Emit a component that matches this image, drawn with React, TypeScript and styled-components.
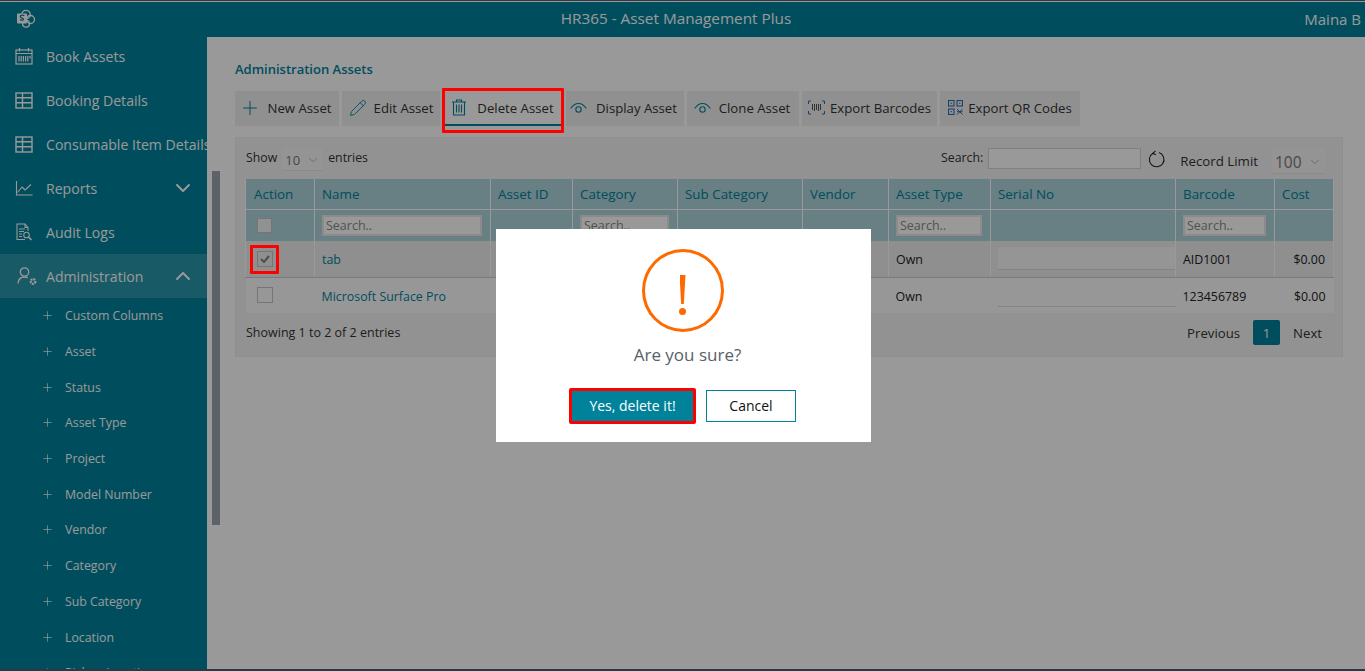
import React from "react"
import styled, { createGlobalStyle } from "styled-components"
import { ChevronDown, ChevronUp, Plus, Pencil } from "lucide-react"

const GlobalStyle = createGlobalStyle`
  html, body {
    margin: 0;
    padding: 0;
    height: 100%;
    overflow: hidden;
    background: #fff;
  }
  * { box-sizing: border-box; }
  body {
    font-family: "Open Sans", "Noto Sans", sans-serif;
    font-size: 13px;
    color: #333;
  }
`

const Page = styled.div`
  height: 671px;
  border-top: 1px solid #46606f;
  padding-top: 1px;
  display: flex;
  flex-direction: column;
  overflow: hidden;
  border-bottom: 2px solid #46606f;
`

const Header = styled.header`
  height: 35px;
  flex: none;
  background: #00829b;
  color: #fff;
  display: flex;
  align-items: center;
  position: relative;
  z-index: 1;
  justify-content: center;
  padding: 0 13px 3px 0;
  font-size: 15.3px;
`

const LogoBox = styled.span`
  position: absolute;
  left: 16px;
  top: 7px;
  display: flex;
`

const UserName = styled.span`
  position: absolute;
  right: 4px;
  top: 7px;
  font-size: 15px;
  white-space: nowrap;
`

const Body = styled.div`
  flex: 1;
  display: flex;
  min-height: 0;
`

const Sidebar = styled.nav`
  width: 207px;
  flex: none;
  background: #00829b;
  color: #fff;
  overflow: hidden;
  margin-top: -3px;
`

const NavItem = styled.div<{ $active?: boolean }>`
  height: 44px;
  display: flex;
  align-items: center;
  padding-left: 15px;
  white-space: nowrap;
  font-size: 14.1px;
  position: relative;
  background: ${(p) => (p.$active ? "rgba(255,255,255,.16)" : "transparent")};
`

const NavIcon = styled.span`
  width: 31px;
  flex: none;
  display: flex;
`

const NavCaret = styled.span`
  position: absolute;
  left: 171px;
  top: 10px;
  display: flex;
`

const SubItem = styled.div`
  height: 35.7px;
  display: flex;
  align-items: center;
  padding-left: 41px;
  gap: 11px;
  font-size: 12.3px;
  white-space: nowrap;
`

const Scrollbar = styled.div`
  position: absolute;
  left: 212px;
  top: 171px;
  width: 8px;
  height: 354px;
  background: #9ba3ad;
`

const Content = styled.main`
  flex: 1;
  background: #fff;
  padding: 25px 0 0 28px;
  min-width: 0;
`

const Title = styled.h1`
  margin: 0 0 15px 0;
  font-size: 13px;
  line-height: 14px;
  font-weight: 600;
  color: #00829b;
`

const Toolbar = styled.div`
  display: flex;
  gap: 3px;
  height: 35px;
`

const ToolButton = styled.div<{ $width: number; $selected?: boolean; $gap: number; $nudge?: number }>`
  width: ${(p) => p.$width}px;
  background: ${(p) => (p.$selected ? "transparent" : "#f0f0f0")};
  border-bottom: 2px solid ${(p) => (p.$selected ? "#00829b" : "transparent")};
  margin: ${(p) => (p.$selected ? "0 2px 0 2px" : "0")};
  padding-right: ${(p) => p.$nudge ?? 0}px;
  display: flex;
  align-items: center;
  justify-content: center;
  gap: ${(p) => p.$gap}px;
  font-size: 13.2px;
  color: #333;
  white-space: nowrap;
  svg { color: #00829b; flex: none; }
`

const Panel = styled.section`
  margin-top: 11px;
  width: 1108px;
  height: 220px;
  background: #f4f4f4;
  border: 1px solid #eee;
  padding: 10px 10px 0;
`

const ControlRow = styled.div`
  display: flex;
  align-items: flex-start;
  height: 31px;
  font-size: 12.3px;
`

const ShowLabel = styled.span`
  margin-right: 5px;
  line-height: 20px;
`

const FakeSelect = styled.div<{ $width: number; $big?: boolean }>`
  width: ${(p) => p.$width}px;
  height: ${(p) => (p.$big ? 26 : 23)}px;
  background: #f7f7f7;
  border-bottom: 1px solid #e6e6e6;
  display: flex;
  align-items: center;
  justify-content: space-between;
  padding: 2px 3px 0 3px;
  font-size: ${(p) => (p.$big ? 15.5 : 13)}px;
  color: #777;
  svg { color: #888; }
`

const EntriesLabel = styled.span`
  margin-left: 5px;
  line-height: 20px;
`

const Spacer = styled.div`
  flex: 1;
`

const SearchLabel = styled.span`
  margin-right: 5px;
  font-size: 12.3px;
  line-height: 20px;
`

const SearchBox = styled.input`
  width: 153px;
  height: 21px;
  border: 1px solid #d6d6d6;
  background: #fff;
  padding: 0;
`

const Refresh = styled.span`
  display: flex;
  margin: 2px 14px 0 7px;
`

const LimitLabel = styled.span`
  font-size: 13.3px;
  line-height: 20px;
  margin: 3px 14px 0 0;
`

const LimitWrap = styled.div`
  margin-right: 7px;
`

const Table = styled.table`
  border-collapse: collapse;
  table-layout: fixed;
  width: 1088px;
  margin-left: -1px;
`

const HeadCell = styled.th`
  height: 30px;
  background: #add4da;
  border: 1px solid #fff;
  border-top: 0;
  color: #00829b;
  font-weight: 400;
  font-size: 13.4px;
  text-align: left;
  padding: 0 7px;
  white-space: nowrap;
  &:first-child { padding-left: 8px; }
`

const FilterCell = styled.td`
  height: 32px;
  background: #add4da;
  border-left: 1px solid #fff;
  border-right: 1px solid #fff;
  padding: 0 8px 0 7px;
`

const FilterInput = styled.input`
  width: 100%;
  height: 21px;
  border: 2px solid #ebe6e6;
  background: #fff;
  font: 12.5px "Open Sans", sans-serif;
  padding: 0 2px;
  display: block;
  &::placeholder { color: #8a8a8a; opacity: 1; }
`

const BodyRow = styled.tr<{ $selected?: boolean }>`
  background: ${(p) => (p.$selected ? "#eee" : "#fcfcfc")};
  td {
    border-left: ${(p) => (p.$selected ? "1px solid #fff" : "0")};
    border-right: ${(p) => (p.$selected ? "1px solid #fff" : "0")};
    border-bottom: ${(p) => (p.$selected ? "1px solid #ccc" : "0")};
  }
`

const Cell = styled.td<{ $right?: boolean; $link?: boolean }>`
  height: 36px;
  padding: 2px ${(p) => (p.$right ? 8 : 7)}px 0 7px;
  white-space: nowrap;
  font-size: 12.4px;
  text-align: ${(p) => (p.$right ? "right" : "left")};
  color: ${(p) => (p.$link ? "#00829b" : "#222")};
`

const CheckCell = styled.td`
  height: 36px;
  padding: 0 7px;
`

const SerialCell = styled.td`
  height: 36px;
  padding: 6px 0 0 7px;
  vertical-align: top;
`

const SerialField = styled.div<{ $filled?: boolean }>`
  height: 23px;
  background: ${(p) => (p.$filled ? "#f9f9f9" : "transparent")};
  border-bottom: 1px solid #ddd;
`

const CheckBox = styled.span<{ $small?: boolean }>`
  width: ${(p) => (p.$small ? 15 : 16)}px;
  height: ${(p) => (p.$small ? 15 : 16)}px;
  margin-left: 4px;
  display: flex;
  align-items: center;
  justify-content: center;
  background: ${(p) => (p.$small ? "#f2f2f2" : "transparent")};
  border: 1px solid #c4c4c4;
`

const Footer = styled.div`
  display: flex;
  align-items: center;
  justify-content: space-between;
  height: 39px;
  font-size: 12.5px;
  padding-right: 10px;
`

const Pager = styled.div`
  display: flex;
  align-items: center;
  font-size: 13.2px;
  gap: 13px;
`

const PageNumber = styled.span`
  width: 27px;
  height: 25px;
  background: #00829b;
  color: #fff;
  display: flex;
  align-items: center;
  justify-content: center;
  border-radius: 2px;
`

const Overlay = styled.div`
  position: fixed;
  inset: 0;
  z-index: 2;
  background: rgba(0, 0, 0, 0.4);
  display: flex;
  align-items: flex-start;
  justify-content: center;
  padding: 229px 0 0 2px;
`

const RedMark = styled.span<{ $left: number; $top: number; $width: number; $height: number }>`
  position: absolute;
  left: ${(p) => p.$left}px;
  top: ${(p) => p.$top}px;
  width: ${(p) => p.$width}px;
  height: ${(p) => p.$height}px;
  border: 3px solid #ff0000;
  border-radius: 1px;
`

const Modal = styled.div`
  width: 375px;
  height: 213px;
  background: #fff;
  display: flex;
  flex-direction: column;
  align-items: center;
  padding: 20px 2px 0 0;
`

const AlertCircle = styled.div`
  width: 82px;
  height: 83px;
  border: 3px solid #ff6a00;
  border-radius: 50%;
  display: flex;
  flex-direction: column;
  align-items: center;
  padding-top: 23px;
`

const AlertBar = styled.span`
  width: 6px;
  height: 29px;
  background: #ff6a00;
  clip-path: polygon(0 0, 100% 0, 72% 100%, 28% 100%);
`

const AlertDot = styled.span`
  width: 7px;
  height: 7px;
  border-radius: 50%;
  background: #ff6a00;
  margin-top: 4px;
`

const Question = styled.div`
  font-size: 17px;
  color: #595f69;
  margin: 12px 0 0 10px;
  line-height: 22px;
`

const ModalActions = styled.div`
  display: flex;
  gap: 10px;
  margin-top: 22px;
  align-items: center;
`

const ConfirmButton = styled.button`
  width: 127px;
  height: 36px;
  background: #00829b;
  color: #fff;
  border: 3px solid #ff0000;
  border-radius: 2px;
  font: 14px "Open Sans", sans-serif;
  padding: 0 0 2px;
`

const CancelButton = styled.button`
  width: 90px;
  height: 32px;
  background: #fff;
  color: #111;
  border: 1px solid #00829b;
  font: 14px "Open Sans", sans-serif;
  padding: 0 0 2px;
`

const SharePointLogo = () => (
  <svg width="20" height="20" viewBox="0 0 20 20" fill="none">
    <circle cx="10" cy="5.5" r="4.200" stroke="#fff" strokeWidth="1.300" />
    <circle cx="14.500" cy="10.500" r="4" stroke="#fff" strokeWidth="1.300" />
    <circle cx="10" cy="14.800" r="3.400" stroke="#fff" strokeWidth="1.300" />
    <rect x="1" y="4.500" width="10" height="10" rx="1" fill="#fff" />
    <path d="M8.300 6.800c-.6-.5-1.300-.7-2-.7-1.200 0-2 .6-2 1.500 0 1.800 3.200 1.200 3.200 2.600 0 .6-.6 1-1.400 1-.8 0-1.500-.3-2.100-.8" stroke="#00829b" strokeWidth="1.300" />
  </svg>
)

const CalendarIcon = () => (
  <svg width="18" height="18" viewBox="0 0 18 18" fill="none" stroke="#fff" strokeWidth="1.200">
    <rect x="1" y="3" width="16" height="14" />
    <path d="M1 6.500h16M4.500 1v3.500M13.500 1v3.500M4 9v5.500M6.200 9v5.500M8.400 9v5.500M10.600 9v5.500M12.800 9v5.500M15 9v2.500" />
  </svg>
)

const GridIcon = () => (
  <svg width="18" height="17" viewBox="0 0 18 17" fill="none" stroke="#fff" strokeWidth="1.400">
    <rect x="1" y="1" width="16" height="15" />
    <path d="M1 5.800h16M1 10.800h16M7.500 1v15" />
  </svg>
)

const ChartIcon = () => (
  <svg width="18" height="16" viewBox="0 0 18 16" fill="none" stroke="#fff" strokeWidth="1.100">
    <path d="M1.500 1v14h16" />
    <path d="M2.500 12.500 7 7l3 3 6-5.500" />
  </svg>
)

const AuditIcon = () => (
  <svg width="18" height="18" viewBox="0 0 18 18" fill="none" stroke="#fff" strokeWidth="1.100">
    <path d="M10 16.500H2V1h8l3 3.500V8" />
    <path d="M10 1v3.500h3M4 6h6M4 8.500h5M4 11h3M4 13.500h3" />
    <circle cx="11.500" cy="12" r="2.800" />
    <path d="m13.500 14 3 3" strokeWidth="1.600" />
  </svg>
)

const AdminIcon = () => (
  <svg width="21" height="19" viewBox="0 0 21 19" fill="none" stroke="#fff" strokeWidth="1.300" style={{ marginLeft: 2 }}>
    <circle cx="7.500" cy="5" r="4.200" />
    <path d="M1 16.500c.4-4.500 3-6.500 6.500-6.500 1.300 0 2.400.3 3.300.8" />
    <circle cx="16" cy="14.500" r="2.300" strokeWidth="2.200" strokeDasharray="1.800 .7" />
  </svg>
)

const TrashIcon = () => (
  <svg width="14" height="17" viewBox="0 0 14 17" fill="none" stroke="currentColor" strokeWidth="1.100">
    <path d="M0 3h14M4.500 3V1h5v2M1.500 3v13h11V3M4.500 5.500v8M7 5.500v8M9.500 5.500v8" />
  </svg>
)

const ArcEyeIcon = () => (
  <svg width="17" height="12" viewBox="0 0 17 12" fill="none" stroke="currentColor" strokeWidth="1.100">
    <path d="M.7 6.500C3 3 5.500 1.500 8.500 1.500s5.500 1.500 7.800 5" />
    <circle cx="8.500" cy="7.500" r="2.700" />
  </svg>
)

const BarcodeIcon = () => (
  <svg width="17" height="15" viewBox="0 0 17 15" fill="none" stroke="#2a6fb0" strokeWidth="1">
    <path d="M3 1H.500v3M14 1h2.500v3M3 14H.500v-3M14 14h2.500v-3" />
    <path d="M4.500 4v6M6.500 4v7M8.500 4v6M10.500 4v7M12.500 4v6" stroke="#555" />
  </svg>
)

const QrIcon = () => (
  <svg width="15" height="15" viewBox="0 0 15 15" fill="none" stroke="#2a6fb0" strokeWidth="1.100">
    <rect x=".5" y=".5" width="5.500" height="5.500" />
    <rect x="9" y=".5" width="5.500" height="5.500" />
    <rect x=".5" y="9" width="5.500" height="5.500" />
    <path d="M2.500 3.200h1.500M11 3.200h1.500M2.500 11.700h1.500M9 9l5.500 5.500M14.500 9 9 14.500M9 11.700h5.500" strokeWidth="1" />
  </svg>
)

const RefreshIcon = () => (
  <svg width="18" height="18" viewBox="0 0 18 18" fill="none" stroke="#222" strokeWidth="1.100">
    <path d="M5 3.200a7.300 7.300 0 1 0 6-.6" />
    <path d="M7.500 .8 4.800 3.300l3 1.500" />
  </svg>
)

const navItems = [
  { label: "Book Assets", icon: <CalendarIcon /> },
  { label: "Booking Details", icon: <GridIcon /> },
  { label: "Consumable Item Details", icon: <GridIcon /> },
  { label: "Reports", icon: <ChartIcon />, caret: "down" },
  { label: "Audit Logs", icon: <AuditIcon /> },
  { label: "Administration", icon: <AdminIcon />, caret: "up", active: true },
]

const subItems = [
  "Custom Columns",
  "Asset",
  "Status",
  "Asset Type",
  "Project",
  "Model Number",
  "Vendor",
  "Category",
  "Sub Category",
  "Location",
  "Pickup Location",
]

const toolItems = [
  { label: "New Asset", width: 104, gap: 7, nudge: 4, icon: <Plus size={22} strokeWidth={1.1} /> },
  { label: "Edit Asset", width: 98, gap: 7, icon: <Pencil size={18} strokeWidth={1.2} /> },
  { label: "Delete Asset", width: 116, gap: 11, icon: <TrashIcon />, selected: true },
  { label: "Display Asset", width: 118, gap: 9, nudge: 3, icon: <ArcEyeIcon /> },
  { label: "Clone Asset", width: 112, gap: 8, nudge: 2, icon: <ArcEyeIcon /> },
  { label: "Export Barcodes", width: 135, gap: 5, icon: <BarcodeIcon /> },
  { label: "Export QR Codes", width: 140, gap: 5, icon: <QrIcon /> },
]

const columns = [
  { label: "Action", width: 69, filter: false },
  { label: "Name", width: 176, filter: true },
  { label: "Asset ID", width: 82, filter: false },
  { label: "Category", width: 105, filter: true },
  { label: "Sub Category", width: 125, filter: false },
  { label: "Vendor", width: 86, filter: false },
  { label: "Asset Type", width: 102, filter: true },
  { label: "Serial No", width: 185, filter: false },
  { label: "Barcode", width: 99, filter: true },
  { label: "Cost", width: 59, filter: false },
]

const rows = [
  { name: "tab", barcode: "AID1001", selected: true },
  { name: "Microsoft Surface Pro", barcode: "123456789", selected: false },
]

export default function App() {
  return (
    <>
      <GlobalStyle />
      <Page>
        <Header>
          <LogoBox><SharePointLogo /></LogoBox>
          HR365 - Asset Management Plus
          <UserName>Maina B</UserName>
        </Header>
        <Body>
          <Sidebar>
            {navItems.map((item) => (
              <NavItem key={item.label} $active={item.active}>
                <NavIcon>{item.icon}</NavIcon>
                {item.label}
                {item.caret === "down" && <NavCaret><ChevronDown size={24} strokeWidth={2} /></NavCaret>}
                {item.caret === "up" && <NavCaret><ChevronUp size={24} strokeWidth={2} /></NavCaret>}
              </NavItem>
            ))}
            {subItems.map((label) => (
              <SubItem key={label}>
                <Plus size={13} strokeWidth={1.3} />
                {label}
              </SubItem>
            ))}
          </Sidebar>
          <Scrollbar />
          <Content>
            <Title>Administration Assets</Title>
            <Toolbar>
              {toolItems.map((tool) => (
                <ToolButton key={tool.label} $width={tool.width} $selected={tool.selected} $gap={tool.gap} $nudge={tool.nudge}>
                  {tool.icon}
                  {tool.label}
                </ToolButton>
              ))}
            </Toolbar>
            <Panel>
              <ControlRow>
                <ShowLabel>Show</ShowLabel>
                <FakeSelect $width={41}>10<ChevronDown size={14} strokeWidth={1} /></FakeSelect>
                <EntriesLabel>entries</EntriesLabel>
                <Spacer />
                <SearchLabel>Search:</SearchLabel>
                <SearchBox aria-label="Search" />
                <Refresh><RefreshIcon /></Refresh>
                <LimitLabel>Record Limit</LimitLabel>
                <LimitWrap>
                  <FakeSelect $width={53} $big>100<ChevronDown size={14} strokeWidth={1} /></FakeSelect>
                </LimitWrap>
              </ControlRow>
              <Table>
                <colgroup>
                  {columns.map((col) => <col key={col.label} width={col.width} />)}
                </colgroup>
                <thead>
                  <tr>
                    {columns.map((col) => <HeadCell key={col.label}>{col.label}</HeadCell>)}
                  </tr>
                </thead>
                <tbody>
                  <tr>
                    {columns.map((col, index) => (
                      <FilterCell key={col.label}>
                        {index === 0 && <CheckBox $small />}
                        {col.filter && <FilterInput placeholder="Search.." />}
                      </FilterCell>
                    ))}
                  </tr>
                  {rows.map((row) => (
                    <BodyRow key={row.name} $selected={row.selected}>
                      <CheckCell>
                        <CheckBox>
                          {row.selected && (
                            <svg width="10" height="8" viewBox="0 0 10 8" fill="none" stroke="#808080" strokeWidth="2"><path d="M1 4l3 3 5-6" /></svg>
                          )}
                        </CheckBox>
                      </CheckCell>
                      <Cell $link>{row.name}</Cell>
                      <Cell />
                      <Cell />
                      <Cell />
                      <Cell />
                      <Cell>Own</Cell>
                      <SerialCell><SerialField $filled={row.selected} /></SerialCell>
                      <Cell>{row.barcode}</Cell>
                      <Cell $right>$0.00</Cell>
                    </BodyRow>
                  ))}
                </tbody>
              </Table>
              <Footer>
                <span>Showing 1 to 2 of 2 entries</span>
                <Pager>
                  <span>Previous</span>
                  <PageNumber>1</PageNumber>
                  <span>Next</span>
                </Pager>
              </Footer>
            </Panel>
          </Content>
        </Body>
      </Page>
      <Overlay>
        <RedMark $left={442} $top={88} $width={122} $height={45} />
        <RedMark $left={250} $top={245} $width={29} $height={29} />
        <Modal>
          <AlertCircle>
            <AlertBar />
            <AlertDot />
          </AlertCircle>
          <Question>Are you sure?</Question>
          <ModalActions>
            <ConfirmButton>Yes, delete it!</ConfirmButton>
            <CancelButton>Cancel</CancelButton>
          </ModalActions>
        </Modal>
      </Overlay>
    </>
  )
}
